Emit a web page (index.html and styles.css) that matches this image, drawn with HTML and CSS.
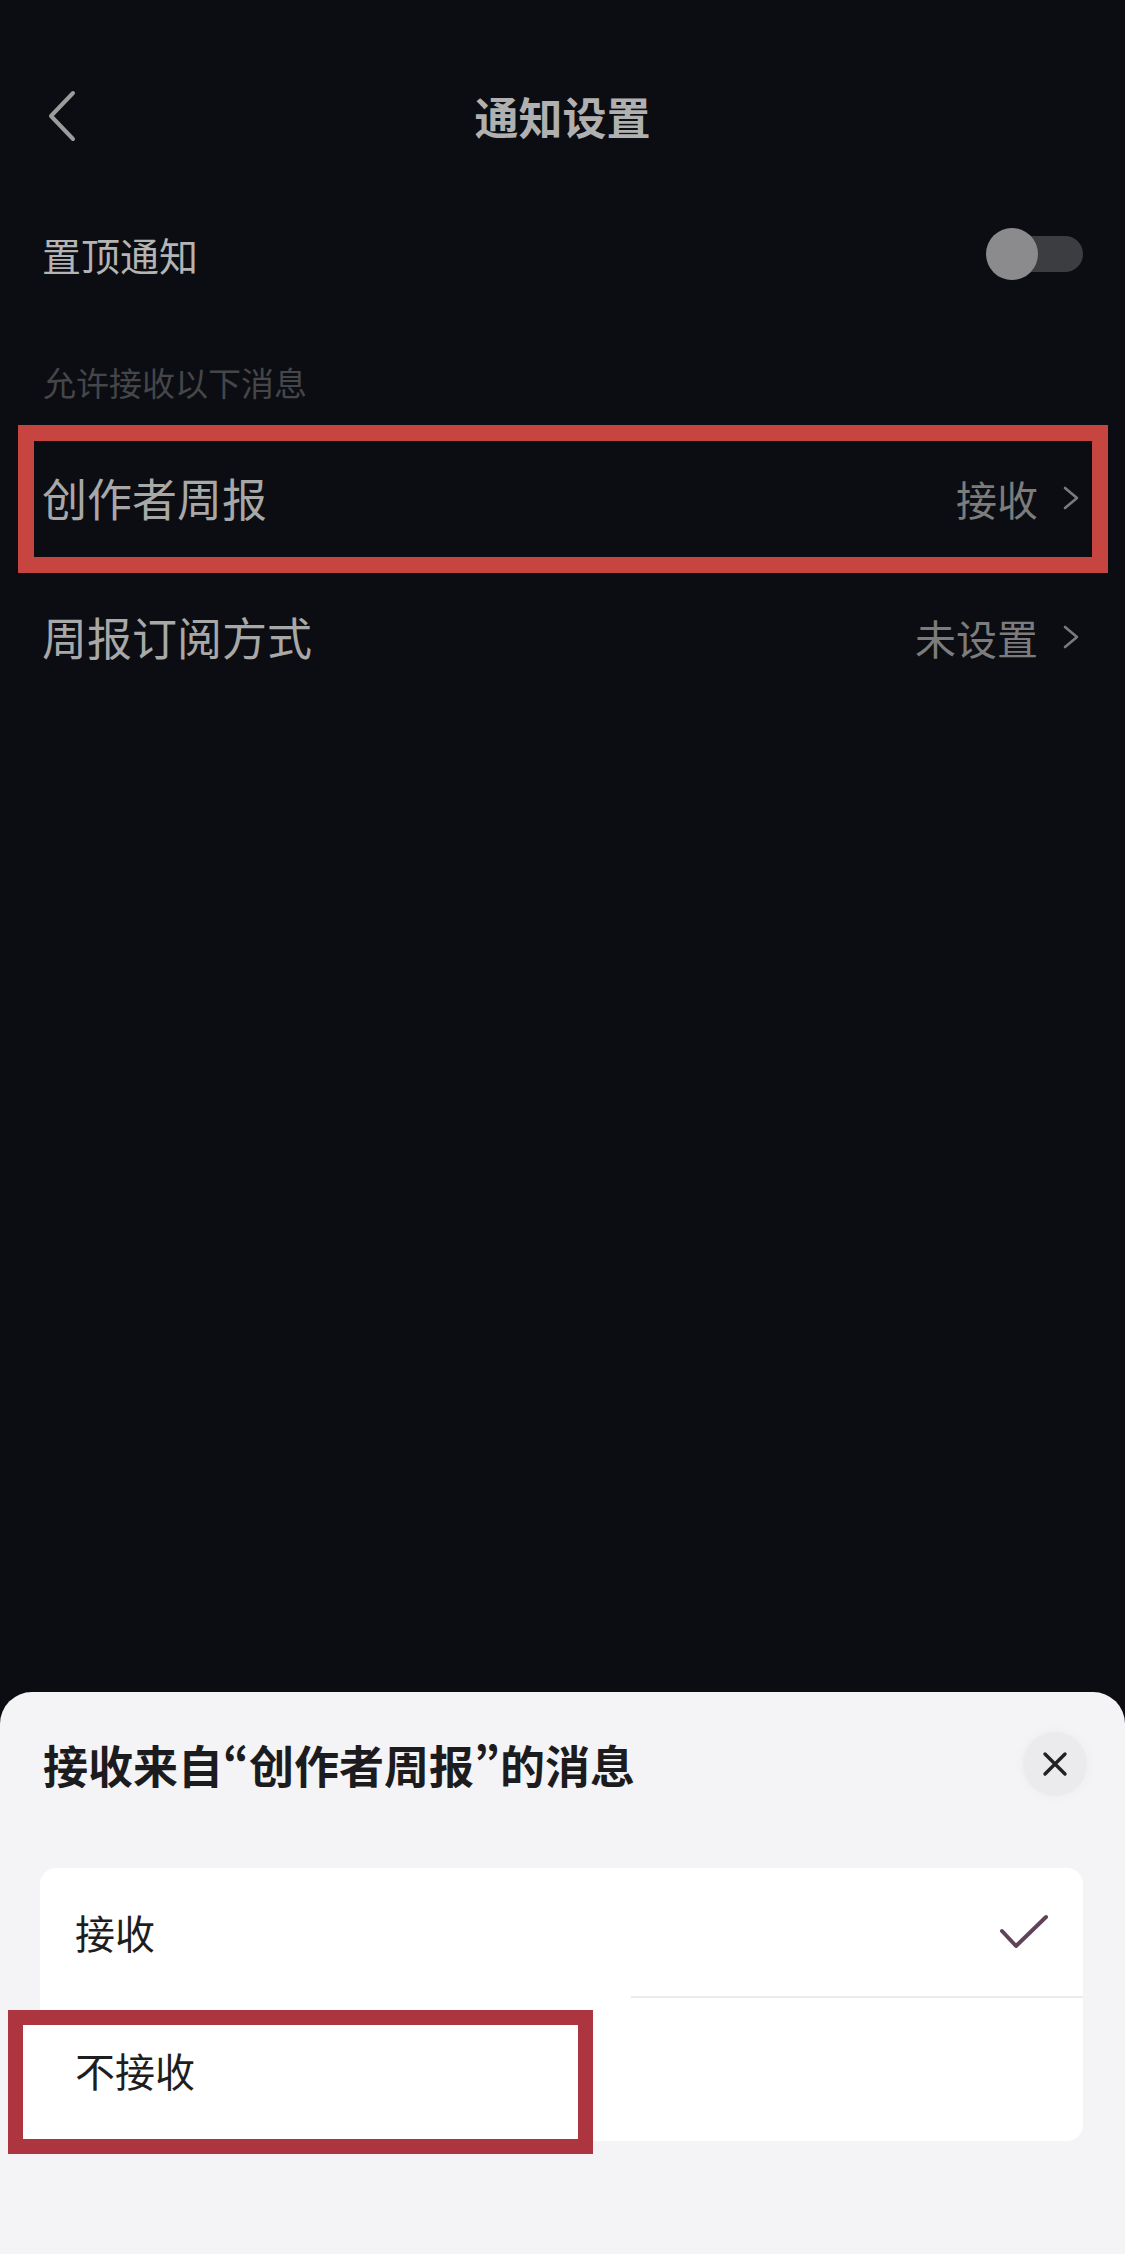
FILE: index.html
```html
<!DOCTYPE html>
<html lang="zh-CN">
<head>
    <meta charset="UTF-8">
    <meta name="viewport" content="width=device-width, initial-scale=1.0">
    <title>通知设置</title>
    <link rel="stylesheet" href="styles.css">
</head>
<body>

    <div class="page">
        <div class="nav">
            <span class="nav-back">
                <svg width="30" height="52" viewBox="0 0 30 52"><polyline points="26,3 4,26 26,49" fill="none" stroke="#9c9c9c" stroke-width="4" stroke-linecap="round" stroke-linejoin="round"/></svg>
            </span>
            <span class="nav-title">通知设置</span>
            <span></span>
        </div>

        <div class="switch-row">
            <span class="row-label small">置顶通知</span>
            <span class="switch"><span class="switch-knob"></span></span>
        </div>

        <div class="section-label">允许接收以下消息</div>

        <div class="list">
            <div class="list-row">
                <span class="row-label">创作者周报</span>
                <span class="row-value">接收
                    <svg width="18" height="26" viewBox="0 0 18 26"><polyline points="3,3 15,13 3,23" fill="none" stroke="#7a7a7a" stroke-width="2.6" stroke-linecap="round" stroke-linejoin="round"/></svg>
                </span>
                <span class="mark mark-dark"></span>
            </div>

            <div class="list-row">
                <span class="row-label">周报订阅方式</span>
                <span class="row-value">未设置
                    <svg width="18" height="26" viewBox="0 0 18 26"><polyline points="3,3 15,13 3,23" fill="none" stroke="#7a7a7a" stroke-width="2.6" stroke-linecap="round" stroke-linejoin="round"/></svg>
                </span>
            </div>
        </div>

        <!-- bottom sheet -->
        <div class="sheet">
            <div class="sheet-head">
                <span class="sheet-title">接收来自<span class="q" lang="ja">“</span>创作者周报<span class="q" lang="ja">”</span>的消息</span>
                <span class="sheet-close">
                    <svg width="26" height="26" viewBox="0 0 26 26"><path d="M3 3 L23 23 M23 3 L3 23" stroke="#222" stroke-width="3.4" stroke-linecap="round"/></svg>
                </span>
            </div>

            <div class="options">
                <div class="option">
                    <span class="option-text">接收</span>
                    <svg width="50" height="36" viewBox="0 0 50 36"><polyline points="3,17 17,32 47,3" fill="none" stroke="#5e4456" stroke-width="4" stroke-linecap="round" stroke-linejoin="round"/></svg>
                </div>
                <div class="divider"></div>
                <div class="option">
                    <span class="mark mark-light"></span>
                    <span class="option-text">不接收</span>
                </div>
            </div>
        </div>
    </div>

</body>
</html>
```

FILE: styles.css
```css
body { margin: 0; background: #0c0d12; font-family: "Noto Sans CJK SC", "Noto Sans", sans-serif; }
.page { width: 1125px; height: 2254px; display: flex; flex-direction: column; overflow: hidden; }

.nav { display: grid; grid-template-columns: 1fr auto 1fr; align-items: center; height: 80px; margin-top: 76px; padding: 0 44px; }
.nav-back { display: flex; padding-left: 3px; }
.nav-title { font-size: 44px; font-weight: 700; color: #b0b0b0; line-height: 80px; }

.switch-row { display: flex; align-items: center; justify-content: space-between; height: 80px; margin-top: 58px; padding: 0 42px; }
.row-label { font-size: 45px; color: #a8a8a8; }
.row-label.small { font-size: 39px; color: #b4b4b4; }
.switch { position: relative; width: 90px; height: 36px; border-radius: 18px; background: #3c3d41; }
.switch-knob { position: absolute; left: -7px; top: -8px; width: 52px; height: 52px; border-radius: 50%; background: #8b8b8d; }

.section-label { margin-top: 68px; padding: 0 43px; font-size: 33px; line-height: 40px; color: #45464a; }

.list { margin-top: 26px; }
.list-row { position: relative; display: flex; align-items: center; justify-content: space-between; height: 139px; padding: 0 45px 0 42px; }
.row-value { display: flex; align-items: center; gap: 24px; font-size: 41px; color: #7c7c7c; }

/* red outline marks */
.mark { position: absolute; box-sizing: border-box; pointer-events: none; }
.mark-dark { left: 18px; top: -3px; right: 17px; bottom: -6px; border: 16px solid #c64541; }
.mark-light { left: -32px; top: 12px; width: 585px; height: 144px; border: 15px solid #ad3540; background: #fff; }

.sheet { margin-top: auto; height: 562px; background: #f4f4f6; border-radius: 32px 32px 0 0; }
.sheet-head { display: flex; align-items: center; justify-content: space-between; height: 96px; margin-top: 24px; padding: 0 38px 0 43px; }
.sheet-title { font-size: 45px; font-weight: 700; color: #1c1c1e; text-spacing-trim: trim-both; }
.sheet-title .q { font-family: "Noto Sans CJK JP", sans-serif; }
.sheet-close { display: flex; align-items: center; justify-content: center; width: 64px; height: 64px; border-radius: 50%; background: #ebebed; box-shadow: 0 0 10px #ebebed; }

.options { margin: 56px 42px 0 40px; background: #fff; border-radius: 16px; }
.option { position: relative; display: flex; align-items: center; justify-content: space-between; height: 128px; padding: 0 34px 0 35px; }
.option + .divider + .option { height: 143px; }
.option-text { position: relative; font-size: 40px; color: #1e1e20; }
.divider { height: 2px; margin-left: 591px; background: #ececee; }
```
